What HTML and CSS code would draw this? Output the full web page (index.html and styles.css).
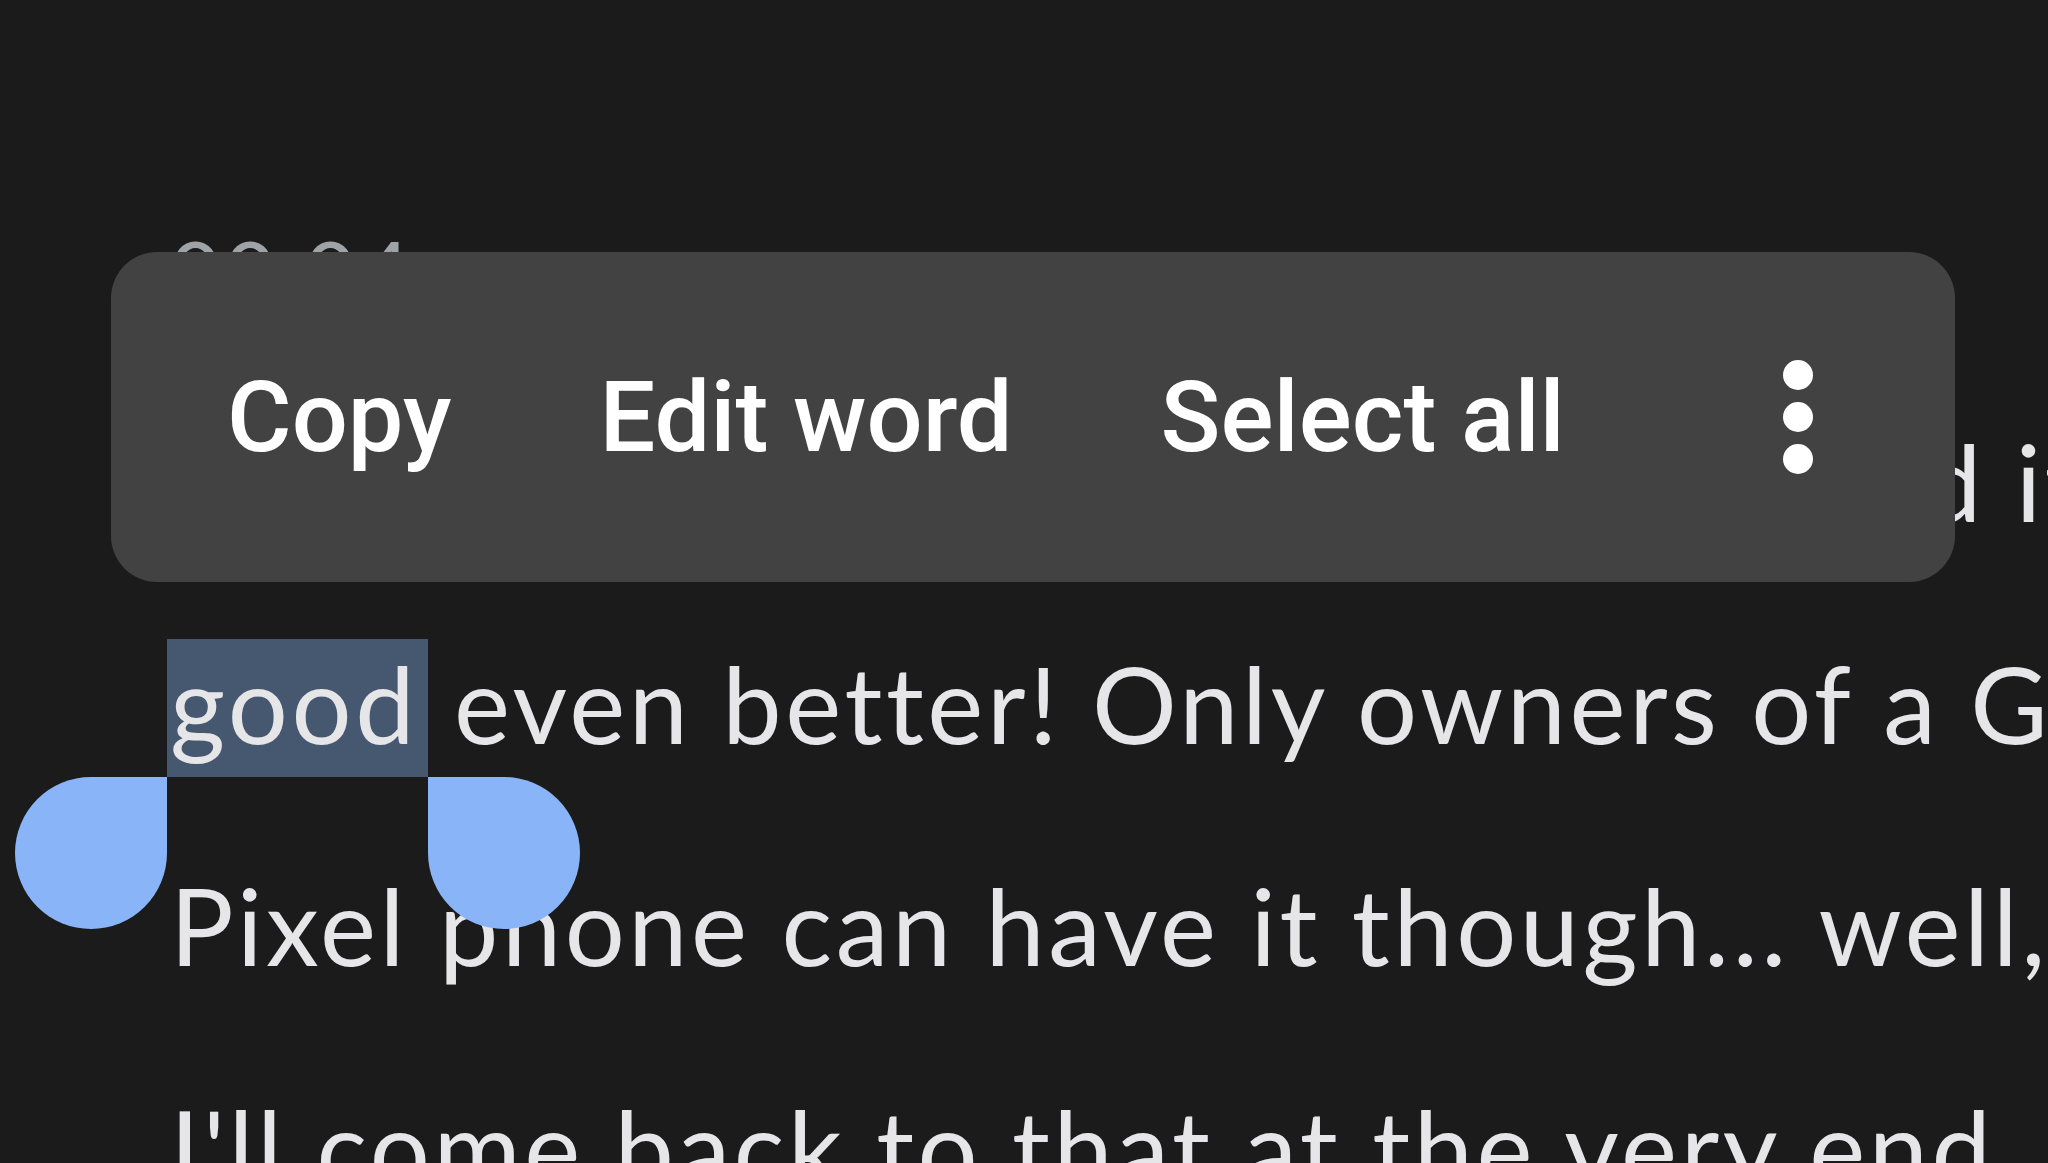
FILE: index.html
```html
<!DOCTYPE html>
<html lang="en">
<head>
    <meta charset="UTF-8">
    <meta name="viewport" content="width=device-width, initial-scale=1.0">
    <title>Recorder</title>
    <link rel="stylesheet" href="styles.css">
</head>
<body>
<div class="article">
    <div class="stamp">00:04</div>
    <div class="line"><span class="covered">Recorder got a big update, an</span>d it makes something</div>
    <div class="line"><span class="selected">good<span class="handle handle-left"></span><span class="handle handle-right"></span></span> even better! Only owners of a Google</div>
    <div class="line">Pixel phone can have it though... well, not quite.</div>
    <div class="line">I'll come back to that at the very end. The</div>
</div>

<div class="toolbar">
    <button class="tool-btn">Copy</button>
    <button class="tool-btn">Edit word</button>
    <button class="tool-btn">Select all</button>
    <button class="more-btn" aria-label="More options">
        <span class="dot"></span>
        <span class="dot"></span>
        <span class="dot"></span>
    </button>
</div>
</body>
</html>
```

FILE: styles.css
```css
html, body {
    margin: 0;
    height: 100%;
    overflow: hidden;
    background-color: #1b1b1b;
}
.article {
    padding: 218px 0 0 170px;
    font-family: Lato, "Open Sans", sans-serif;
    font-size: 106px;
    color: #e6e6e8;
    letter-spacing: 3.6px;
    white-space: nowrap;
}
.stamp {
    font-size: 88px;
    line-height: 106px;
    color: #9ea3a8;
    margin-bottom: 46px;
}
.line {
    line-height: 222px;
}
.covered {
    display: inline-block;
    width: 1752px;
}
.selected {
    position: relative;
    background-color: #465870;
    padding: 0 10px 10px 3px;
    margin-left: -3px;
    margin-right: -5px;
}
.handle {
    position: absolute;
    top: 100%;
    width: 152px;
    height: 152px;
    background-color: #8ab4f8;
}
.handle-left {
    right: 100%;
    border-radius: 50% 0 50% 50%;
}
.handle-right {
    left: 100%;
    border-radius: 0 50% 50% 50%;
}
.toolbar {
    position: absolute;
    top: 252px;
    left: 111px;
    width: 1844px;
    height: 330px;
    box-sizing: border-box;
    padding: 0 142px 0 116px;
    border-radius: 46px;
    background-color: #424242;
    display: flex;
    align-items: center;
    gap: 148px;
}
.tool-btn {
    background: none;
    border: none;
    padding: 0;
    font-family: Roboto, "Liberation Sans", sans-serif;
    font-weight: 500;
    font-size: 99px;
    color: #ffffff;
    cursor: pointer;
}
.more-btn {
    margin-left: auto;
    background: none;
    border: none;
    padding: 0;
    display: flex;
    flex-direction: column;
    gap: 12px;
}
.dot {
    width: 30px;
    height: 30px;
    border-radius: 50%;
    background-color: #ffffff;
}
```
